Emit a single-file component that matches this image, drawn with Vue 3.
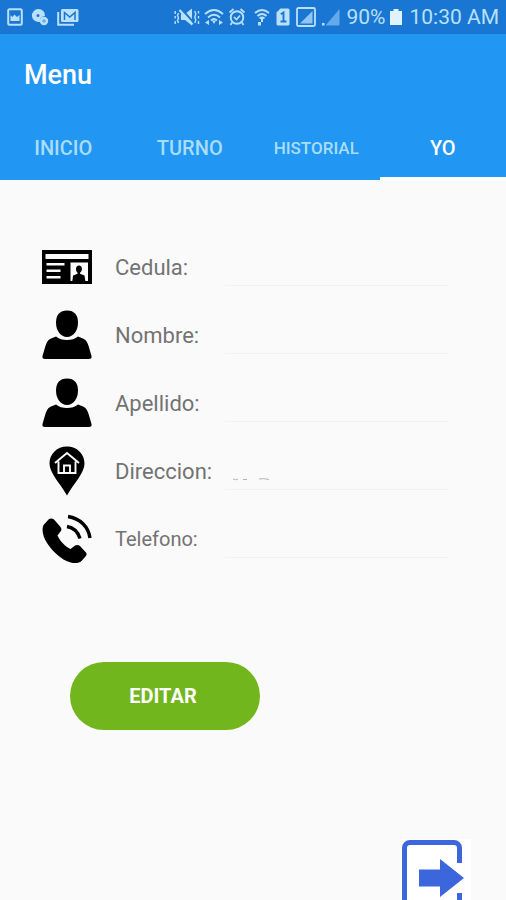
<script setup>
import { reactive, ref } from 'vue'

const tabs = ['INICIO', 'TURNO', 'HISTORIAL', 'YO']
const active = ref('YO')
const fields = reactive([
  { id: 'cedula', label: 'Cedula:', icon: 'card', value: '' },
  { id: 'nombre', label: 'Nombre:', icon: 'person', value: '' },
  { id: 'apellido', label: 'Apellido:', icon: 'person', value: '' },
  { id: 'direccion', label: 'Direccion:', icon: 'pin', value: '' },
  { id: 'telefono', label: 'Telefono:', icon: 'phone', value: '' }
])
</script>

<template>
  <div class="page">
    <header class="top">
      <div class="status">
        <div class="notices">
          <svg width="16" height="18" viewBox="0 0 16 18">
            <rect x="1.2" y="1.2" width="13.6" height="15.6" rx="1.5" fill="none" stroke="currentColor" stroke-width="2" />
            <path d="M3.500 13V7l2 2 2-2.500 2.500 2.500 2.500-2v6z" fill="currentColor" />
          </svg>
          <svg width="18" height="18" viewBox="0 0 18 18">
            <path fill-rule="evenodd" d="M7.500 1a6.500 6.500 0 1 0 1.500 12.800A5 5 0 0 1 14 8 6.500 6.500 0 0 0 7.500 1zm-.5 5a1.500 1.500 0 1 1 0 3 1.500 1.500 0 0 1 0-3z" fill="currentColor" />
            <circle cx="13" cy="13" r="4.200" fill="currentColor" />
            <path d="M13 11v4M11 13h4" stroke="#1976d2" stroke-width=".6" />
          </svg>
          <svg width="22" height="18" viewBox="0 0 22 18">
            <path d="M1.200 4v12.800H17" fill="none" stroke="currentColor" stroke-width="2" />
            <rect x="4" y="1" width="17.500" height="13" rx="1.500" fill="currentColor" />
            <path d="M7.500 12V4.500l5.300 4.500L18 4.500V12" fill="none" stroke="#1976d2" stroke-width="1.500" />
          </svg>
        </div>
        <div class="system">
          <svg width="26" height="20" viewBox="0 0 26 20">
            <path d="M7 7h4l7-5.500v17L11 13H7z" fill="currentColor" />
            <path d="M7 1.500 20 16" stroke="#1976d2" stroke-width="2" />
            <path d="M5.500 3 18.500 17.500" stroke="currentColor" stroke-width="2.200" />
            <path d="M4.500 6 3.500 8.500l1 2.500-1 2.500 1 2.500M1.200 4v3M1.200 9v2.500M1.200 14v3M20.800 4l1 3-1 3 1 3-1 3M24.500 4v2.500M24.500 9v2.500M24.500 14v3" fill="none" stroke="currentColor" stroke-width="1.400" />
          </svg>
          <svg width="20" height="20" viewBox="0 0 20 20">
            <g fill="none" stroke="currentColor" stroke-width="1.900">
              <path d="M1 7q9-8 18 0M4 10.500q6-5.500 12 0M7 13.500q3-3 6 0" />
            </g>
            <path d="M8 13.500h4L10 17zM1 15.500l4-2.500v5zM19 15.500 15 13v5z" fill="currentColor" />
          </svg>
          <svg width="18" height="20" viewBox="0 0 18 20">
            <circle cx="9" cy="10.500" r="6.300" fill="none" stroke="currentColor" stroke-width="1.900" />
            <path d="m6 10 2.500 2.500 3.500-4M1.500 5.500l4-3.500M16.500 5.500l-4-3.500M4 15.500 2.500 18M14 15.500l1.500 2.500" fill="none" stroke="currentColor" stroke-width="1.700" />
          </svg>
          <svg class="gap" width="16" height="20" viewBox="0 0 16 20">
            <path d="M1 6q7-6 14 0M3.500 9q4.500-4 9 0M5.500 11.500q2.500-2 5 0" fill="none" stroke="currentColor" stroke-width="1.900" />
            <path d="M7 11h2v4H7zM4 15h3v3.500H4z" fill="currentColor" />
          </svg>
          <svg class="gap-sm" width="14" height="20" viewBox="0 0 14 20">
            <path d="M4.500 1.500H12a1.500 1.500 0 0 1 1.500 1.500v14a1.500 1.500 0 0 1-1.500 1.500H2A1.500 1.500 0 0 1 .5 17V5.500z" fill="currentColor" />
            <path d="M4.800 7.200 7.500 5.500v8.500M4.500 14.500h6" fill="none" stroke="#1976d2" stroke-width="1.900" />
          </svg>
          <svg class="gap-sm" width="20" height="20" viewBox="0 0 20 20">
            <rect x="1" y="1" width="18" height="18" rx="1.500" fill="none" stroke="currentColor" stroke-width="1.800" />
            <path d="M4 16.500 16.500 4v12.500z" fill="currentColor" opacity=".75" />
          </svg>
          <svg class="gap-sm" width="18" height="20" viewBox="0 0 18 20">
            <path d="M3.500 18.500 17.500 2v16.500z" fill="#64a9ea" />
            <path d="M0 16h2.500v2.500H0z" fill="currentColor" />
          </svg>
          <span class="gap-sm">90%</span>
          <svg width="14" height="20" viewBox="0 0 14 20">
            <path d="M4.500 2h5v2H13v14H1V4h3.500z" fill="#e1f2ff" />
          </svg>
          <span class="gap-sm">10:30 AM</span>
        </div>
      </div>
      <h1>Menu</h1>
      <nav class="tabs">
        <button
          v-for="t in tabs"
          :key="t"
          type="button"
          class="tab"
          :class="{ active: t === active, small: t.length > 8 }"
          @click="active = t"
        >{{ t }}</button>
      </nav>
    </header>

    <main>
      <form @submit.prevent>
        <div v-for="f in fields" :key="f.id" class="row">
          <svg v-if="f.icon === 'card'" class="icon" viewBox="0 0 50 50">
            <path d="M0 8h50v34H0z" />
            <path d="M3.500 12h43v5h-43zM28.500 20.500H46V39H28.500zM4.500 21h18v2.500h-18zM4.500 27.500h14V30h-14zM4.500 34h14v2.500h-14z" fill="#fafafa" />
            <path d="M37 23.500c4 0 3.500 6 1 7.200v1l4.500 1.800.8 5.500h-13l.8-5.500 4.500-1.800v-1C33.500 29.500 33 23.500 37 23.500z" />
          </svg>
          <svg v-else-if="f.icon === 'person'" class="icon" viewBox="0 0 50 50">
            <path d="M25 .5c7.500 0 11 4.800 11 12 0 8-4.500 14.500-11 14.500S14 20.500 14 12.500C14 5.300 17.500.5 25 .5z" />
            <path d="M14 26.500c5.500 4.700 16.500 4.700 22 0l5.500 2.200c3 1.500 4 4.300 5 7l3 10.300c.5 2-.5 3-2.500 3H3c-2 0-3-1-2.500-3l3-10.300c1-2.700 2-5.500 5-7z" />
          </svg>
          <svg v-else-if="f.icon === 'pin'" class="icon" viewBox="0 0 50 50">
            <path d="M25 .5c10 0 17.500 7.500 17.500 17C42.500 27 32 37 25 49.500 18 37 7.500 27 7.500 17.500 7.500 8 15 .5 25 .5z" />
            <path d="M13 17 25 7l12 10M16.500 15.500V27h17V15.500M22 27v-7.500h6V27" fill="none" stroke="#fafafa" stroke-width="1.900" />
          </svg>
          <svg v-else class="icon" viewBox="0 0 50 50">
            <path d="M6.500 5.500 2 10.500C-1 14.500 1 23 5 29c5 7.500 11.500 14 19.500 18 5 2.500 12 3 15 0l4-4.500c1.500-1.700 1.500-3 0-4.500l-5.500-6c-1.700-1.400-4-1.300-5.500 0l-4 3C23.500 33 18 27 15.500 21.500l3-4c1.200-1.500 1.200-3 0-4.500l-6.500-7.500c-1.500-1.500-4-1.500-5.500 0z" />
            <path d="M25 12.500c6 1 11 5.500 13 12M26 2.500C38 4.500 46.500 12.500 48 24" fill="none" stroke="#000" stroke-width="3.400" />
          </svg>
          <label :for="f.id" :class="{ compact: f.id === 'telefono' }">{{ f.label }}</label>
          <div class="entry">
            <input :id="f.id" v-model="f.value" type="text" autocomplete="off" />
            <svg v-if="f.id === 'direccion'" class="trace" width="40" height="4" viewBox="0 0 40 4">
              <path d="M0 2q2.500 1.500 5 0M10 2.500h4M26 2q4-1 10 .5" fill="none" stroke="#b4b4b4" />
            </svg>
          </div>
        </div>
        <button type="submit" class="edit">EDITAR</button>
      </form>
      <button type="button" class="exit" aria-label="Salir">
        <svg width="70" height="78" viewBox="0 0 70 78">
          <path d="M58.500 24V9a5.500 5.500 0 0 0-5.500-5.500H9A5.500 5.500 0 0 0 3.500 9v60A5.500 5.500 0 0 0 9 74.500h44a5.500 5.500 0 0 0 5.500-5.500V54" fill="none" stroke="#3b66dc" stroke-width="5" />
          <path d="M39 10v58l31-29z" fill="#fff" />
          <path d="M18 30.500h21V20l24 19-24 19V47.500H18z" fill="#3b66dc" />
        </svg>
      </button>
    </main>
  </div>
</template>

<style>
body {
  margin: 0;
  background: #fafafa;
}
</style>

<style scoped>
.page {
  display: flex;
  flex-direction: column;
  height: 100vh;
  overflow: hidden;
  background: #fafafa;
  font-family: Roboto, "Liberation Sans", sans-serif;
}
.top {
  background: #2196f3;
  flex: none;
}
.status {
  display: flex;
  justify-content: space-between;
  align-items: center;
  height: 34px;
  box-sizing: border-box;
  padding: 0 7px;
  background: #1976d2;
  color: #b9e0fc;
  font-size: 21px;
}
.notices {
  display: flex;
  align-items: center;
  gap: 8px;
}
.system {
  display: flex;
  align-items: center;
  gap: 4px;
  white-space: nowrap;
}
.gap {
  margin-left: 4px;
}
.gap-sm {
  margin-left: 2px;
}
h1 {
  margin: 0;
  padding: 24px 24px 0;
  font-size: 27px;
  line-height: 34px;
  font-weight: 500;
  color: #fff;
}
.tabs {
  display: flex;
  padding-top: 24px;
}
.tab {
  flex: 1 1 0;
  min-width: 0;
  height: 64px;
  padding: 2px 0 0;
  border: 0;
  border-bottom: 3px solid transparent;
  background: none;
  color: #a9defa;
  font: 500 20px/24px Roboto, "Liberation Sans", sans-serif;
}
.tab.small {
  font-size: 17px;
}
.tab.active {
  color: #fff;
  border-bottom-color: #fff;
}
main {
  flex: 1;
  display: flex;
  flex-direction: column;
}
form {
  padding: 53px 57px 0 42px;
}
.row {
  display: flex;
  align-items: center;
  height: 68px;
}
.icon {
  flex: none;
  width: 50px;
  height: 50px;
}
label {
  flex: none;
  width: 110px;
  margin-left: 23px;
  padding-top: 2px;
  font-size: 22px;
  line-height: 26px;
  color: #737373;
}
label.compact {
  padding-top: 0;
  font-size: 20px;
}
.entry {
  position: relative;
  flex: 1;
  min-width: 0;
}
input {
  display: block;
  width: 100%;
  height: 38px;
  box-sizing: border-box;
  padding: 0 4px;
  border: 0;
  border-bottom: 1px solid #f2f2f2;
  outline: 0;
  background: transparent;
  font: 20px Roboto, "Liberation Sans", sans-serif;
  color: #333;
}
.trace {
  position: absolute;
  left: 8px;
  bottom: 9px;
}
.edit {
  display: block;
  width: 190px;
  height: 68px;
  margin: 89px 0 0 28px;
  padding: 0 4px 0 0;
  border: 0;
  border-radius: 34px;
  background: #70b61c;
  color: #fff;
  font: 700 20px/24px Roboto, "Liberation Sans", sans-serif;
}
.exit {
  align-self: flex-end;
  flex: none;
  margin: 109px 35px 0 0;
  padding: 0;
  border: 0;
  background: #fff;
}
.exit svg {
  display: block;
}
</style>
